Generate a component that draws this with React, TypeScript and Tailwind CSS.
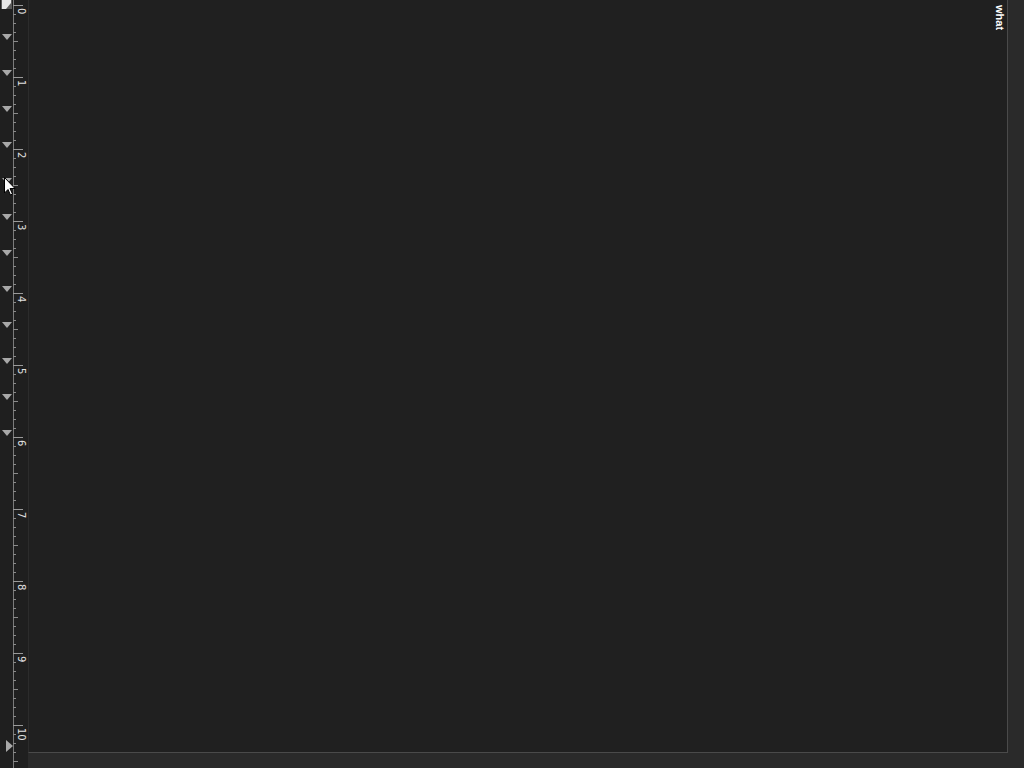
import React from "react";

const INCH = 72;
const TOP = 5;

function Ruler() {
  const ticks: React.ReactNode[] = [];
  for (let i = 0; i <= 10; i++) {
    const y0 = TOP + i * INCH;
    ticks.push(<line key={`M${i}`} x1={13} y1={y0 + 0.5} x2={23} y2={y0 + 0.5} stroke="#9a9a9a" strokeWidth={1} />);
    ticks.push(
      <text
        key={`T${i}`}
        transform={`translate(18, ${y0 + 3}) rotate(90)`}
        fontSize={10}
        fill="#e0e0e0"
        fontFamily="'DejaVu Sans', sans-serif"
      >
        {i}
      </text>
    );
    for (let j = 1; j < 8; j++) {
      const y = y0 + j * 9;
      if (y > 768) break;
      ticks.push(<line key={`m${i}-${j}`} x1={13} y1={y + 0.5} x2={j === 4 ? 18 : 16} y2={y + 0.5} stroke="#8a8a8a" strokeWidth={1} />);
    }
  }
  const tabs: React.ReactNode[] = [];
  for (let k = 0; k < 12; k++) {
    const y = 34 + k * 36;
    tabs.push(<polygon key={`tab${k}`} points={`2,${y} 12,${y} 7,${y + 6}`} fill="#a8a8a8" />);
  }
  return (
    <svg width={28} height={768} className="block">
      <line x1={13.5} y1={0} x2={13.5} y2={768} stroke="#7a7a7a" strokeWidth={1} />
      {ticks}
      {tabs}
      {/* first line marker */}
      <rect x={1} y={0} width={11} height={9} fill="#5a5a5a" />
      <polygon points="2,0 11,0 11,3 6,9 2,9" fill="#e6e6e6" />
      {/* bottom margin marker */}
      <polygon points="6,740 13,746 6,752" fill="#a8a8a8" />
      {/* mouse pointer */}
      <path
        d="M4.5 177.5 L4.5 193 L8 189.5 L10.5 195 L12.5 194 L10 188.5 L15 188.5 Z"
        fill="#ffffff"
        stroke="#000000"
        strokeWidth={1}
        strokeLinejoin="round"
      />
    </svg>
  );
}

export default function App() {
  return (
    <div className="flex w-[1024px] h-[768px] overflow-hidden bg-[#1e1e1e]" style={{ fontFamily: "'DejaVu Sans', sans-serif" }}>
      <div className="w-[28px] shrink-0 bg-[#1f1f1f]">
        <Ruler />
      </div>
      <div className="flex flex-col flex-1 bg-[#2a2a2a]">
        <div className="flex flex-1">
          <div className="flex-1 bg-[#202020] border-l border-r border-b border-l-[#2c2c2c] border-r-[#4a4a4a] border-b-[#4a4a4a] flex justify-end">
            <div className="[writing-mode:vertical-rl] text-white font-bold text-[11px] leading-[12px] mt-[5px] mr-[1px] [font-family:'Liberation_Sans',sans-serif]">
              what
            </div>
          </div>
          <div className="w-[16px] shrink-0 bg-[#2a2a2a]" />
        </div>
        <div className="h-[15px] shrink-0 bg-[#2a2a2a]" />
      </div>
    </div>
  );
}
